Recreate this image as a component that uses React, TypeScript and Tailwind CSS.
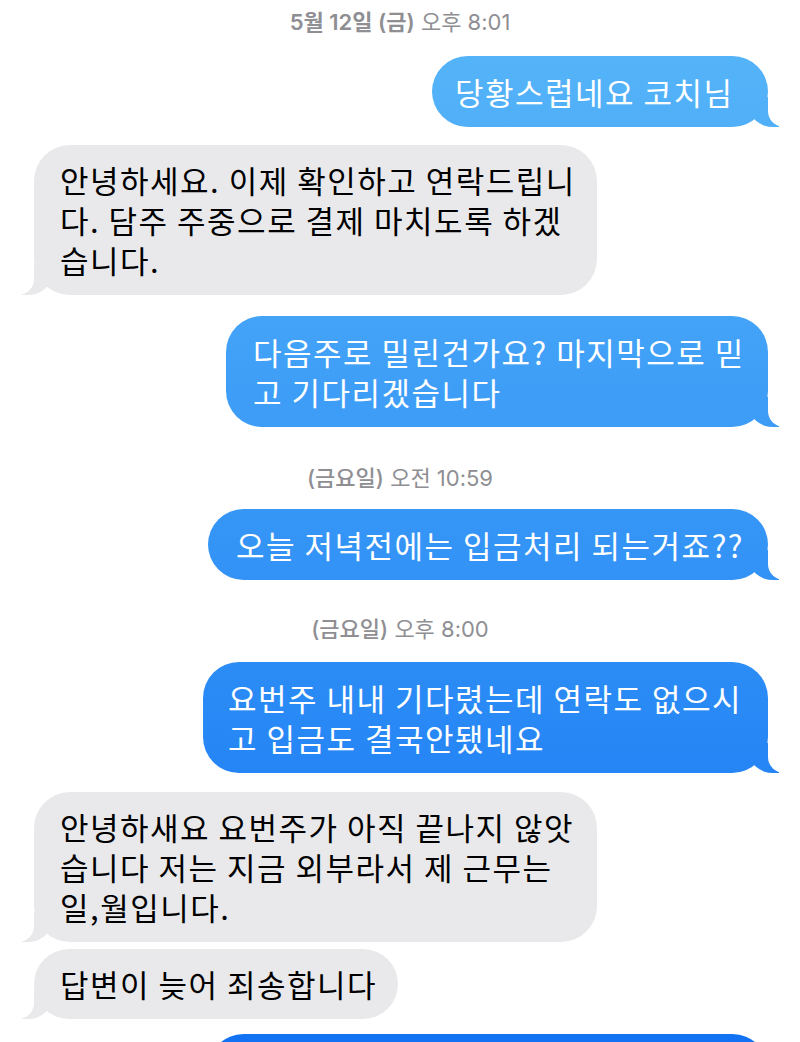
import React from "react";

const KR = "font-['Noto_Sans_CJK_KR','Noto_Sans',sans-serif]";
const TS = "font-['Inter','Noto_Sans_CJK_KR',sans-serif]";

function Blue({
  lines,
  width,
  pl,
  mt,
}: {
  lines: string[];
  width: string;
  pl: string;
  mt: string;
}) {
  return (
    <div className={`relative self-end mr-[32px] ${width} ${mt}`}>
      <span className="absolute bottom-0 -right-[11px] h-[30px] w-[30px] rounded-bl-[24px_21px] bg-fixed bg-linear-to-b from-[#58b7f8] to-[#1272f3]" />
      <span className="absolute bottom-0 -right-[41px] h-[30px] w-[41px] rounded-bl-[16px] bg-white" />
      <div
        className={`relative rounded-[36px] bg-fixed bg-linear-to-b from-[#58b7f8] to-[#1272f3] ${pl} pt-[16px] pb-[15px] text-white text-[31px] tracking-[1.5px] leading-[40px] ${KR}`}
      >
        {lines.map((l, i) => (
          <div key={i} className="whitespace-nowrap">
            {l}
          </div>
        ))}
      </div>
    </div>
  );
}

function Gray({
  lines,
  width,
  mt,
}: {
  lines: string[];
  width: string;
  mt: string;
}) {
  return (
    <div className={`relative self-start ml-[34px] ${width} ${mt}`}>
      <span className="absolute bottom-0 -left-[12px] h-[30px] w-[30px] rounded-br-[24px_21px] bg-[#e9e9eb]" />
      <span className="absolute bottom-0 -left-[41px] h-[30px] w-[41px] rounded-br-[16px] bg-white" />
      <div
        className={`relative rounded-[36px] bg-[#e9e9eb] pl-[26px] pt-[15px] pb-[15px] text-black text-[31px] tracking-[1.5px] leading-[40px] ${KR}`}
      >
        {lines.map((l, i) => (
          <div key={i} className="whitespace-nowrap">
            {l}
          </div>
        ))}
      </div>
    </div>
  );
}

function Stamp({
  bold,
  rest,
  mt,
  weight,
}: {
  bold: string;
  rest: string;
  mt: string;
  weight: string;
}) {
  return (
    <div
      className={`self-center ${mt} text-[22px] leading-[26px] text-[#8e8e93] ${TS} whitespace-nowrap`}
    >
      <span className={weight}>{bold}</span> {rest}
    </div>
  );
}

export default function App() {
  return (
    <div className="w-[800px] h-[1042px] overflow-hidden bg-white flex flex-col">
      <Stamp bold="5월 12일 (금)" rest="오후 8:01" mt="mt-[9px]" weight="font-semibold" />
      <Blue lines={["당황스럽네요 코치님"]} width="w-[336px]" pl="pl-[23px]" mt="mt-[21px]" />
      <Gray
        lines={[
          "안녕하세요. 이제 확인하고 연락드립니",
          "다. 담주 주중으로 결제 마치도록 하겠",
          "습니다.",
        ]}
        width="w-[563px]"
        mt="mt-[18px]"
      />
      <Blue
        lines={["다음주로 밀린건가요? 마지막으로 믿", "고 기다리겠습니다"]}
        width="w-[542px]"
        pl="pl-[27px]"
        mt="mt-[21px]"
      />
      <Stamp bold="(금요일)" rest="오전 10:59" mt="mt-[38px]" weight="font-medium" />
      <Blue
        lines={["오늘 저녁전에는 입금처리 되는거죠??"]}
        width="w-[560px]"
        pl="pl-[28px]"
        mt="mt-[18px]"
      />
      <Stamp bold="(금요일)" rest="오후 8:00" mt="mt-[36px]" weight="font-medium" />
      <Blue
        lines={["요번주 내내 기다렸는데 연락도 없으시", "고 입금도 결국안됐네요"]}
        width="w-[565px]"
        pl="pl-[25px]"
        mt="mt-[20px]"
      />
      <Gray
        lines={[
          "안녕하새요 요번주가 아직 끝나지 않앗",
          "습니다 저는 지금 외부라서 제 근무는",
          "일,월입니다.",
        ]}
        width="w-[563px]"
        mt="mt-[19px]"
      />
      <Gray lines={["답변이 늦어 죄송합니다"]} width="w-[364px]" mt="mt-[7px]" />
      <Blue lines={["\u00a0"]} width="w-[560px]" pl="pl-[28px]" mt="mt-[15px]" />
    </div>
  );
}
